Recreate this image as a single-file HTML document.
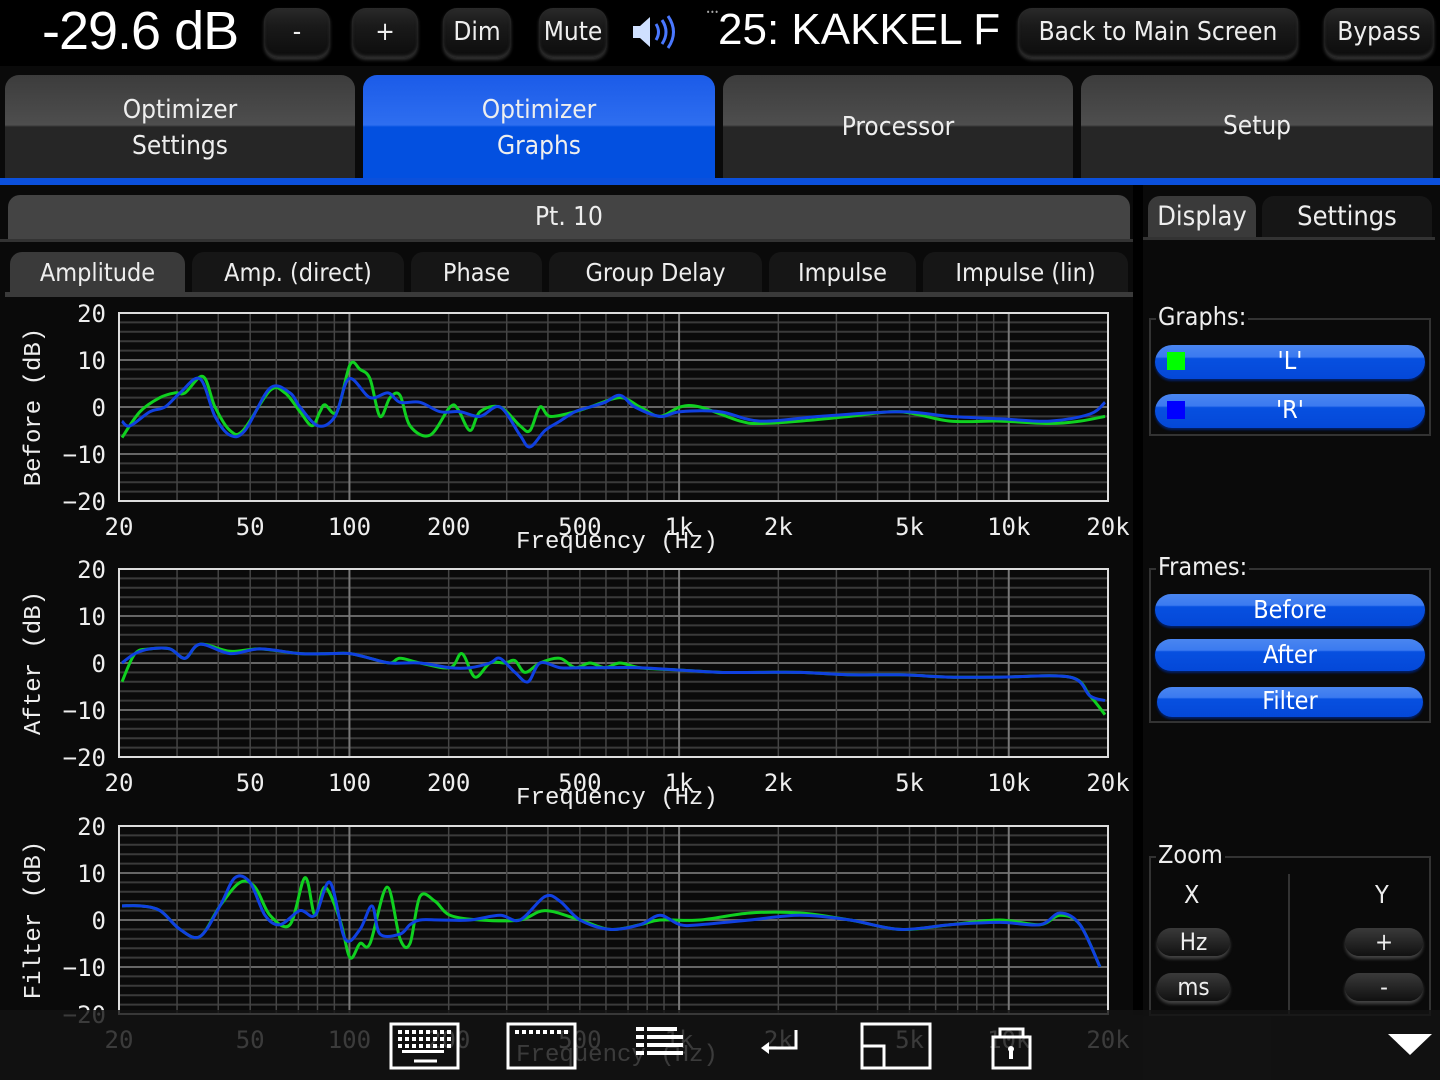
<!DOCTYPE html>
<html><head><meta charset="utf-8"><style>
*{margin:0;padding:0;box-sizing:border-box}
body{width:1440px;height:1080px;background:#0a0a0a;position:relative;overflow:hidden;font-family:"DejaVu Sans Condensed","Liberation Sans Narrow","Liberation Sans",sans-serif;color:#eee}
.a{position:absolute}
.top{left:0;top:0;width:1440px;height:66px;background:#000}
.btn{position:absolute;border-radius:14px;background:linear-gradient(#2a2a2a 0%,#1a1a1a 35%,#0c0c0c 100%);box-shadow:0 2px 3px #333, inset 0 -2px 3px #333;color:#eee;font-size:26px;text-align:center;line-height:48px}
.tab{position:absolute;top:75px;height:104px;border-radius:14px 14px 0 0;background:linear-gradient(#3c3c3c 0,#4e4e4e 48%,#262626 50%,#262626 100%);font-size:26px;text-align:center;line-height:36px;padding-top:17px;color:#eee}
.tab.sel{background:linear-gradient(#1b5be8 0,#2e6ef0 48%,#0350e0 50%,#0350e0 100%)}
.sub{position:absolute;top:252px;height:41px;border-radius:12px 12px 0 0;background:#161616;font-size:25px;text-align:center;line-height:41px;color:#eee}
.fs{position:absolute;border:2px solid #333}
.lg{position:absolute;background:#0a0a0a;font-size:25px;padding:0 2px;color:#eee}
.pill{position:absolute;height:34px;border-radius:17px;background:linear-gradient(#4a86f0 0,#3b7af0 35%,#0750e0 40%,#0448d8 100%);box-shadow:0 2px 2px #02206a;color:#fff;font-size:25px;text-align:center;line-height:32px}
.sb{position:absolute;height:28px;border-radius:14px;background:linear-gradient(#3a3a3a,#111);box-shadow:0 3px 3px #444;font-size:24px;text-align:center;line-height:28px;color:#eee}
</style></head><body>
<div class="a top"></div>
<div class="a" style="left:42px;top:0px;font-size:54px;color:#fff;letter-spacing:-1px;font-family:'Liberation Sans',sans-serif">-29.6 dB</div>
<div class="btn" style="left:264px;top:8px;width:66px;height:50px">-</div>
<div class="btn" style="left:352px;top:8px;width:66px;height:50px">+</div>
<div class="btn" style="left:443px;top:8px;width:68px;height:50px">Dim</div>
<div class="btn" style="left:539px;top:8px;width:68px;height:50px">Mute</div>
<svg class="a" style="left:630px;top:12px" width="56" height="40" viewBox="0 0 56 40"><path d="M3 14h7l10-9v30l-10-9H3z" fill="#cfe0ff"/><path d="M26 12q5 8 0 16M32 8q8 12 0 24M38 4q11 16 0 32" stroke="#4a78ff" stroke-width="3" fill="none"/></svg>
<div class="a" style="left:706px;top:8px;font-size:8px;color:#aaa">•••</div>
<div class="a" style="left:718px;top:5px;font-size:44px;color:#fff;white-space:nowrap;width:284px;overflow:hidden;font-family:'Liberation Sans',sans-serif">25: KAKKEL FILTER</div>
<div class="btn" style="left:1018px;top:8px;width:280px;height:50px">Back to Main Screen</div>
<div class="btn" style="left:1324px;top:8px;width:110px;height:50px">Bypass</div>

<div class="tab" style="left:5px;width:350px">Optimizer<br>Settings</div>
<div class="tab sel" style="left:363px;width:352px">Optimizer<br>Graphs</div>
<div class="tab" style="left:723px;width:350px;line-height:68px;padding-top:17px"><span style="position:relative;top:1px">Processor</span></div>
<div class="tab" style="left:1081px;width:352px;line-height:68px;padding-top:17px">Setup</div>
<div class="a" style="left:0;top:178px;width:1440px;height:7px;background:#0b50dc"></div>

<div class="a" style="left:1133px;top:185px;width:10px;height:830px;background:#000"></div>
<div class="a" style="left:8px;top:195px;width:1122px;height:44px;background:#444;border-radius:12px 12px 0 0;font-size:26px;text-align:center;line-height:44px">Pt. 10</div>
<div class="a" style="left:0;top:239px;width:1133px;height:3px;background:#333"></div>
<div class="sub" style="left:10px;width:175px;background:#3a3a3a">Amplitude</div>
<div class="sub" style="left:192px;width:212px">Amp. (direct)</div>
<div class="sub" style="left:411px;width:131px">Phase</div>
<div class="sub" style="left:549px;width:213px">Group Delay</div>
<div class="sub" style="left:769px;width:147px">Impulse</div>
<div class="sub" style="left:923px;width:205px">Impulse (lin)</div>
<div class="a" style="left:5px;top:292px;width:1128px;height:5px;background:#3a3a3a"></div>

<svg id="g" class="a" style="left:0;top:300px" width="1133" height="780"></svg>

<div class="sub" style="left:1148px;top:196px;width:108px;height:42px;line-height:42px;background:#3a3a3a;font-size:27px">Display</div>
<div class="sub" style="left:1262px;top:196px;width:170px;height:42px;line-height:42px;font-size:27px">Settings</div>
<div class="a" style="left:1143px;top:237px;width:292px;height:3px;background:#333"></div>

<div class="fs" style="left:1149px;top:318px;width:282px;height:118px"></div>
<div class="lg" style="left:1156px;top:302px">Graphs:</div>
<div class="pill" style="left:1155px;top:345px;width:270px">'L'</div>
<div class="a" style="left:1167px;top:352px;width:18px;height:18px;background:#0f0"></div>
<div class="pill" style="left:1155px;top:394px;width:270px">'R'</div>
<div class="a" style="left:1167px;top:401px;width:18px;height:18px;background:#00f"></div>

<div class="fs" style="left:1149px;top:568px;width:282px;height:155px"></div>
<div class="lg" style="left:1156px;top:552px">Frames:</div>
<div class="pill" style="left:1155px;top:594px;width:270px;height:32px">Before</div>
<div class="pill" style="left:1155px;top:639px;width:270px;height:32px">After</div>
<div class="pill" style="left:1157px;top:687px;width:266px;height:30px;line-height:28px">Filter</div>

<div class="fs" style="left:1149px;top:856px;width:282px;height:160px"></div>
<div class="lg" style="left:1156px;top:840px">Zoom</div>
<div class="a" style="left:1288px;top:874px;width:2px;height:140px;background:#333"></div>
<div class="a" style="left:1184px;top:880px;font-size:25px">X</div>
<div class="a" style="left:1375px;top:880px;font-size:25px">Y</div>
<div class="sb" style="left:1157px;top:928px;width:73px">Hz</div>
<div class="sb" style="left:1157px;top:973px;width:73px">ms</div>
<div class="sb" style="left:1345px;top:928px;width:78px">+</div>
<div class="sb" style="left:1345px;top:973px;width:78px">-</div>

<div class="a" style="left:0;top:1010px;width:1440px;height:70px;background:rgba(20,20,20,0.82)"></div>
<svg class="a" style="left:0;top:1000px" width="1440" height="80">
<g fill="none" stroke="#fff" stroke-width="3">
<rect x="391" y="24" width="67" height="44"/><rect x="508" y="24" width="67" height="44"/>
<rect x="862" y="24" width="68" height="44"/><path d="M862 46h22v22"/>
<rect x="993" y="37" width="37" height="31"/><path d="M1000 37v-8h23v8"/>
<path d="M437 61h-23"/><path d="M796 30v18h-28"/>
</g>
<g fill="#fff">
<path d="M769 42l-8 6 8 6z"/>
<rect x="636" y="27" width="8" height="4"/><rect x="647" y="27" width="30" height="4"/>
<rect x="636" y="35" width="8" height="4"/><rect x="647" y="35" width="36" height="4"/>
<rect x="636" y="43" width="8" height="4"/><rect x="647" y="43" width="36" height="4"/>
<rect x="636" y="51" width="8" height="4"/><rect x="647" y="51" width="36" height="4"/>
<rect x="1009" y="49" width="4" height="10"/><circle cx="1011" cy="49" r="3"/>
<path d="M1388 34h44l-22 21z"/>
</g>
<g fill="#fff" id="keys"></g>
</svg>

<script>
var NS="http://www.w3.org/2000/svg",g=document.getElementById('g');
function el(t,a,p){var e=document.createElementNS(NS,t);for(var k in a)e.setAttribute(k,a[k]);(p||g).appendChild(e);return e}
var X0=119,X1=1108;
function fx(f){return X0+Math.log10(f/20)/3*(X1-X0)}
function cr(pts,y0){var s="M"+pts[0][0]+" "+(y0-pts[0][1]*4.7);
for(var i=0;i<pts.length-1;i++){var p0=pts[Math.max(0,i-1)],p1=pts[i],p2=pts[i+1],p3=pts[Math.min(pts.length-1,i+2)];
var a=[p1[0],y0-p1[1]*4.7],b=[p2[0],y0-p2[1]*4.7],c0=[p0[0],y0-p0[1]*4.7],c3=[p3[0],y0-p3[1]*4.7];
s+=" C"+(a[0]+(b[0]-c0[0])/6).toFixed(1)+" "+(a[1]+(b[1]-c0[1])/6).toFixed(1)+" "+(b[0]-(c3[0]-a[0])/6).toFixed(1)+" "+(b[1]-(c3[1]-a[1])/6).toFixed(1)+" "+b[0]+" "+b[1].toFixed(1)}
return s}
function graph(top,label,G,B){
 var y0=top+94;
 for(var d=-20;d<=20;d+=2){var y=y0-d*4.7;el('line',{x1:X0,x2:X1,y1:y,y2:y,stroke:d%10==0?'#666':'#3a3a3a','stroke-width':2})}
 [20,30,40,50,60,70,80,90,100,200,300,400,500,600,700,800,900,1000,2000,3000,4000,5000,6000,7000,8000,9000,10000,20000].forEach(function(f){var x=fx(f);var m=(f==100||f==1000||f==10000);el('line',{x1:x,x2:x,y1:top,y2:top+188,stroke:m?'#777':'#444','stroke-width':m?2:1.5})});
 el('rect',{x:X0,y:top,width:X1-X0,height:188,fill:'none',stroke:'#ddd','stroke-width':2});
 [20,10,0,-10,-20].forEach(function(d){var t=el('text',{x:106,y:y0-d*4.7+9,'text-anchor':'end','font-size':24,fill:'#eee','font-family':'DejaVu Sans Mono,Liberation Mono,monospace'});t.textContent=(d<0?'−':'')+Math.abs(d)});
 [[20,'20'],[50,'50'],[100,'100'],[200,'200'],[500,'500'],[1000,'1k'],[2000,'2k'],[5000,'5k'],[10000,'10k'],[20000,'20k']].forEach(function(l){var t=el('text',{x:fx(l[0]),y:top+222,'text-anchor':'middle','font-size':24,fill:'#eee','font-family':'DejaVu Sans Mono,Liberation Mono,monospace'});t.textContent=l[1]});
 var t=el('text',{x:617,y:top+235,'text-anchor':'middle','font-size':24,fill:'#eee','font-family':'Liberation Mono,monospace'});t.textContent='Frequency (Hz)';
 var t2=el('text',{transform:'translate(40 '+(y0)+') rotate(-90)','text-anchor':'middle','font-size':24,fill:'#eee','font-family':'Liberation Mono,monospace'});t2.textContent=label;
 el('path',{d:cr(G,y0),stroke:'#10d020',fill:'none','stroke-width':3});
 el('path',{d:cr(B,y0),stroke:'#1040e0',fill:'none','stroke-width':3});
}
graph(13,'Before (dB)',
[[122,-6.5],[140,-1],[160,2],[175,3],[185,3],[203,6.5],[215,0],[230,-5],[243,-5],[270,3.5],[285,3],[300,-1],[312,-4],[320,-1],[325,0.5],[337,-1],[350,9],[360,8],[370,6],[380,-2],[390,2],[400,2.5],[410,-4],[430,-6],[450,0],[458,-0.5],[470,-5],[480,-1],[500,0],[520,-4],[530,-5],[540,0],[550,-2],[575,-1],[590,0],[620,2],[640,0],[660,-2],[680,0],[700,0],[740,-3],[760,-3.5],[800,-3],[850,-2],[900,-1],[950,-3],[1000,-3],[1050,-3.5],[1080,-3],[1105,-2]],
[[122,-3],[130,-4],[150,-1],[165,0],[180,3],[200,6],[215,-2],[230,-6],[245,-5],[270,4],[290,3],[300,0],[318,-4],[335,-2],[349,6],[370,2],[388,3],[400,1],[420,1],[440,-1],[460,-1],[480,-2],[500,0],[520,-6],[530,-8.5],[545,-5],[560,-3],[575,-1],[590,0],[605,1],[620,2.5],[635,0],[660,-2],[680,-1],[720,-1],[760,-3],[820,-2],[900,-1],[950,-2],[1000,-2.5],[1050,-3],[1090,-1.5],[1105,1]]);
graph(269,'After (dB)',
[[122,-4],[135,2],[150,3],[170,3],[185,1],[200,4],[230,2.5],[260,3],[300,2],[330,2],[350,2],[370,1],[390,0],[400,1],[420,0],[450,-1],[462,2],[475,-3],[490,0],[505,0],[515,0.5],[525,-2],[540,0],[560,1],[575,-1],[590,0],[605,-1],[620,0],[640,-1],[680,-1.5],[720,-2],[760,-2],[800,-2],[850,-2.5],[900,-2.5],[950,-3],[1000,-3],[1070,-3],[1090,-7],[1105,-11]],
[[122,0],[135,2],[150,3],[170,3],[185,1],[200,4],[230,2],[260,3],[300,2],[330,2],[350,2],[370,1],[390,0],[420,0],[450,-1],[470,-1],[490,0],[500,1],[515,-2],[528,-4],[540,0],[560,-1],[580,-1],[600,-1],[640,-1],[680,-1.5],[720,-2],[760,-2],[800,-2],[850,-2.5],[900,-2.5],[950,-3],[1000,-3],[1070,-3],[1090,-7],[1105,-8]]);
graph(526,'Filter (dB)',
[[122,3],[140,3],[160,2],[180,-2],[200,-3.5],[220,3],[240,8],[255,7],[270,1],[290,-1],[305,9],[315,1],[325,7],[340,0],[350,-8],[360,-5],[370,-5],[387,7],[400,-4],[410,-5],[420,5],[435,4],[450,1],[480,0],[520,0],[545,2],[580,0],[610,-2],[640,-1],[660,0],[700,0],[750,1.5],[800,1.5],[850,0],[900,-2],[950,-1],[1000,0],[1040,-1],[1060,1],[1080,-1],[1100,-10]],
[[122,3],[140,3],[160,2],[180,-2],[200,-3.5],[220,3],[235,9],[250,8],[265,1],[280,-1],[300,2],[315,1],[330,8],[345,-4],[360,-2],[372,3],[380,-3],[400,-3],[410,-1],[420,0],[440,0],[470,0],[500,1],[520,0],[545,5],[560,4],[580,0],[610,-2],[640,-1],[660,1],[680,-1],[700,-1],[750,0],[800,1],[850,0],[900,-2],[950,-1],[1000,-0.5],[1040,-1],[1060,1.5],[1080,-1],[1100,-10]]);
var k=document.getElementById('keys');
for(var r=0;r<3;r++)for(var c=0;c<8;c++)el('rect',{x:398+c*7,y:30+r*7,width:4,height:4},k);
el('rect',{x:402,y:50,width:42,height:3},k);
for(var c=0;c<8;c++)el('rect',{x:515+c*7,y:30,width:4,height:4},k);
</script>
</body></html>
